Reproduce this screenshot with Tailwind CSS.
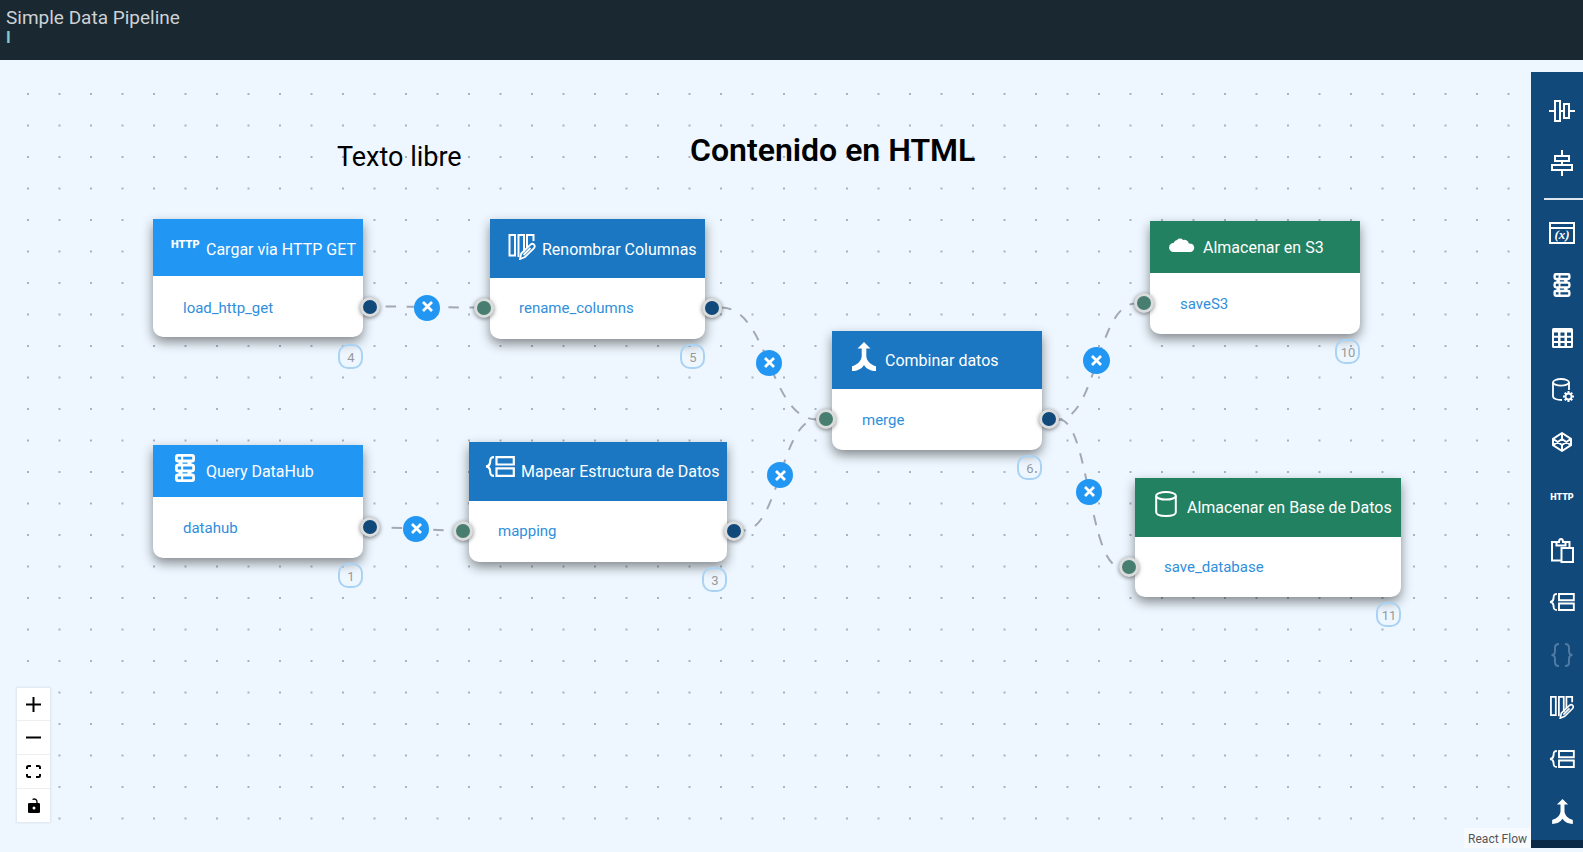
<!DOCTYPE html>
<html lang="es">
<head>
<meta charset="utf-8">
<title>Simple Data Pipeline</title>
<script src="https://cdn.jsdelivr.net/npm/@tailwindcss/browser@4"></script>
</head>
<body class="flex min-h-screen flex-col overflow-hidden bg-[#eef7ff] font-[Roboto,sans-serif]">
<svg class="hidden">
  <symbol id="columns" viewBox="0 0 27 26"><g fill="none" stroke="currentColor" stroke-width="2"><path d="M1 1h5.500v20.500H1zM10 23V1h5.500v17M18.500 14V1H25v6"/><path d="M11.500 25l1.200-5.500L22 10.600q2-1.600 3.500 0t0 3.500L16.500 23zM15 21l7-7" stroke-width="1.800"/></g></symbol>
  <symbol id="hub" viewBox="0 0 20 28"><g fill="none" stroke="currentColor" stroke-width="2.800"><rect x="1.400" y="1.400" width="17.200" height="5.600" rx="1.500"/><rect x="1.400" y="11.200" width="17.200" height="5.600" rx="1.500"/><rect x="1.400" y="21" width="17.200" height="5.600" rx="1.500"/></g><path fill="currentColor" d="M6 2h2.200v4H6zM6 12h2.200v4H6zM6 22h2.200v4H6zM3.500 7h4v4h-4zM12.500 7h4v4h-4zM3.500 17h4v4h-4zM12.500 17h4v4h-4z"/></symbol>
  <symbol id="mapping" viewBox="0 0 30 21"><path fill="none" stroke="currentColor" stroke-width="2.200" d="M11.500 1.200h17.300v7.300H11.500zM11.500 12.300h17.300v7.500H11.500zM9 1.200C4.500 1.200 5.500 4 5 7Q4.400 10.300 1 10.500Q4.400 10.700 5 14C5.500 17 4.500 19.800 9 19.800"/></symbol>
  <symbol id="merge" viewBox="0 0 24 29"><path fill="currentColor" d="M12 0l6.500 6.500H14.300V14c0 5 4.700 9 9.700 10.300V29c-5 0-9.500-2-12-6C9.500 27 5 29 0 29v-4.700C5 23 9.700 19 9.700 14V6.500H5.500z"/></symbol>
  <symbol id="cloud" viewBox="0 0 24 13"><path fill="currentColor" d="M4.200 13A4.200 4.200 0 0 1 4.200 4.600A4.300 4.300 0 0 1 7.400 1.800A3.800 3.800 0 0 1 13 1.800A4 4 0 0 1 18.300 5.200A4 4 0 0 1 20.300 13z"/></symbol>
  <symbol id="database" viewBox="0 0 22 26"><g fill="none" stroke="currentColor" stroke-width="2"><ellipse cx="11" cy="4.800" rx="9.800" ry="3.800"/><path d="M1.200 4.800v16.400c0 5 19.600 5 19.600 0V4.800"/></g></symbol>
</svg>

<header class="h-[60px] bg-[#1a2832] px-[6px] pt-[6px]">
  <h1 class="text-[19px] leading-6 text-[#cdd2d5]">Simple Data Pipeline</h1>
  <p class="text-[16px] font-bold leading-4 text-[#80cbc4]">I</p>
</header>

<main class="relative flex-1">
  <!-- Dot grid -->
  <div class="absolute inset-x-0 bottom-1 top-3"><svg class="h-full w-full">
    <defs><pattern id="dots" x="12.250" y="6.250" width="31.500" height="31.500" patternUnits="userSpaceOnUse"><circle cx="15.750" cy="15.750" r="1.100" fill="#97a1b4"/></pattern></defs>
    <rect y="10" width="100%" height="750" fill="url(#dots)"/>
  </svg></div>
  <!-- Connections -->
  <svg class="absolute inset-0 h-full w-full">
    <g transform="translate(0 -60)" fill="none" stroke="#a3a8b4" stroke-width="2" stroke-dasharray="10.500 10.500">
      <path stroke-dashoffset="10.500" d="M375 306.500C425 306.500 425 307.500 480 307.500"/>
      <path stroke-dashoffset="10.500" d="M381 527.600C420 527.600 420 530.500 463 530.500"/>
      <path d="M721 307.500C769 307.500 769 419.500 817 419.500"/>
      <path stroke-dashoffset="8" d="M743 530.500C780 530.500 780 419.500 817 419.500"/>
      <path stroke-dashoffset="6" d="M1058 419.500C1097 419.500 1097 303.500 1136 303.500"/>
      <path d="M1059 419.500C1089 419.500 1089 566.500 1120 566.500"/>
    </g>
  </svg>

  <p class="absolute left-[337px] top-[77px] text-[27px] leading-[40px] text-black">Texto libre</p>
  <h2 class="absolute left-[690px] top-[70px] text-[32px] font-semibold leading-[40px] text-black">Contenido en HTML</h2>

  <!-- Nodes -->
  <article class="absolute left-[153px] top-[159px] w-[210px] rounded-b-[10px] bg-white shadow-[0_5px_12px_rgba(0,0,0,0.45)]">
    <div class="flex h-[57px] items-center gap-[7px] bg-[#2196f3] pl-[18px] pt-1 text-white"><span class="mb-[10px] w-[28px] text-[11px] font-black leading-3">HTTP</span><h3 class="whitespace-nowrap text-[16px] leading-6">Cargar via HTTP GET</h3></div>
    <p class="h-[61px] pl-[30px] text-[15px] leading-[64px] text-[#2f8fdb]">load_http_get</p>
    <i class="absolute -right-[17px] top-[78px] size-5 rounded-full border-[3px] border-[#dadcdd] bg-[#11497a] shadow-[0_1px_4px_rgba(0,0,0,0.5)]"></i>
    <span class="absolute right-0 top-[125px] size-[25px] rounded-[10px] border-2 border-[#a9d2f3] pl-px text-center text-[13px] leading-[24px] text-[#999]">4</span>
  </article>

  <article class="absolute left-[490px] top-[159px] w-[215px] rounded-b-[10px] bg-white shadow-[0_5px_12px_rgba(0,0,0,0.45)]">
    <div class="flex h-[59px] items-center gap-[6px] bg-[#1b77c2] pl-[18px] pt-[2px] text-white"><svg class="mb-[6px] h-[26px] w-[28px]"><use href="#columns"/></svg><h3 class="whitespace-nowrap text-[16px] leading-6">Renombrar Columnas</h3></div>
    <p class="h-[61px] pl-[29px] text-[15px] leading-[60px] text-[#2f8fdb]">rename_columns</p>
    <i class="absolute -left-[16px] top-[79px] size-5 rounded-full border-[3px] border-[#dadcdd] bg-[#487e6f] shadow-[0_1px_4px_rgba(0,0,0,0.5)]"></i>
    <i class="absolute -right-[17px] top-[79px] size-5 rounded-full border-[3px] border-[#dadcdd] bg-[#11497a] shadow-[0_1px_4px_rgba(0,0,0,0.5)]"></i>
    <span class="absolute right-0 top-[125px] size-[25px] rounded-[10px] border-2 border-[#a9d2f3] pl-px text-center text-[13px] leading-[24px] text-[#999]">5</span>
  </article>

  <article class="absolute left-[153px] top-[385px] w-[210px] rounded-b-[10px] bg-white shadow-[0_5px_12px_rgba(0,0,0,0.45)]">
    <div class="flex h-[52px] items-center gap-[7px] bg-[#2196f3] pl-[18px] pt-[2px] text-white"><svg class="mb-2 h-[28px] w-[28px]"><use href="#hub"/></svg><h3 class="whitespace-nowrap text-[16px] leading-6">Query DataHub</h3></div>
    <p class="h-[61px] pl-[30px] text-[15px] leading-[62px] text-[#2f8fdb]">datahub</p>
    <i class="absolute -right-[17px] top-[72px] size-5 rounded-full border-[3px] border-[#dadcdd] bg-[#11497a] shadow-[0_1px_4px_rgba(0,0,0,0.5)]"></i>
    <span class="absolute right-0 top-[118px] size-[25px] rounded-[10px] border-2 border-[#a9d2f3] pl-px text-center text-[13px] leading-[24px] text-[#999]">1</span>
  </article>

  <article class="absolute left-[469px] top-[382px] w-[258px] rounded-b-[10px] bg-white shadow-[0_5px_12px_rgba(0,0,0,0.45)]">
    <div class="flex h-[59px] items-center gap-[6px] bg-[#1b77c2] pl-[16px] text-white"><svg class="mb-[10px] h-[21px] w-[30px]"><use href="#mapping"/></svg><h3 class="whitespace-nowrap text-[16px] leading-6">Mapear Estructura de Datos</h3></div>
    <p class="h-[61px] pl-[29px] text-[15px] leading-[60px] text-[#2f8fdb]">mapping</p>
    <i class="absolute -left-[16px] top-[79px] size-5 rounded-full border-[3px] border-[#dadcdd] bg-[#487e6f] shadow-[0_1px_4px_rgba(0,0,0,0.5)]"></i>
    <i class="absolute -right-[17px] top-[79px] size-5 rounded-full border-[3px] border-[#dadcdd] bg-[#11497a] shadow-[0_1px_4px_rgba(0,0,0,0.5)]"></i>
    <span class="absolute right-0 top-[125px] size-[25px] rounded-[10px] border-2 border-[#a9d2f3] pl-px text-center text-[13px] leading-[24px] text-[#999]">3</span>
  </article>

  <article class="absolute left-[832px] top-[271px] w-[210px] rounded-b-[10px] bg-white shadow-[0_5px_12px_rgba(0,0,0,0.45)]">
    <div class="flex h-[58px] items-center gap-[7px] bg-[#1b77c2] pl-[18px] pt-[2px] text-white"><svg class="mb-[10px] h-[29px] w-[28px]"><use href="#merge"/></svg><h3 class="whitespace-nowrap text-[16px] leading-6">Combinar datos</h3></div>
    <p class="h-[61px] pl-[30px] text-[15px] leading-[62px] text-[#2f8fdb]">merge</p>
    <i class="absolute -left-[16px] top-[78px] size-5 rounded-full border-[3px] border-[#dadcdd] bg-[#487e6f] shadow-[0_1px_4px_rgba(0,0,0,0.5)]"></i>
    <i class="absolute -right-[17px] top-[78px] size-5 rounded-full border-[3px] border-[#dadcdd] bg-[#11497a] shadow-[0_1px_4px_rgba(0,0,0,0.5)]"></i>
    <span class="absolute right-0 top-[124px] size-[25px] rounded-[10px] border-2 border-[#a9d2f3] pl-px text-center text-[13px] leading-[24px] text-[#999]">6</span>
  </article>

  <article class="absolute left-[1150px] top-[161px] w-[210px] rounded-b-[10px] bg-white shadow-[0_5px_12px_rgba(0,0,0,0.45)]">
    <div class="flex h-[52px] items-center gap-[7px] bg-[#228161] pl-[18px] pt-[2px] text-white"><svg class="mb-[6px] h-[14px] w-[28px]"><use href="#cloud"/></svg><h3 class="whitespace-nowrap text-[16px] leading-6">Almacenar en S3</h3></div>
    <p class="h-[61px] pl-[30px] text-[15px] leading-[62px] text-[#2f8fdb]">saveS3</p>
    <i class="absolute -left-[16px] top-[72px] size-5 rounded-full border-[3px] border-[#dadcdd] bg-[#487e6f] shadow-[0_1px_4px_rgba(0,0,0,0.5)]"></i>
    <span class="absolute right-0 top-[118px] size-[25px] rounded-[10px] border-2 border-[#a9d2f3] pl-px text-center text-[13px] leading-[24px] text-[#999]">10</span>
  </article>

  <article class="absolute left-[1135px] top-[418px] w-[266px] rounded-b-[10px] bg-white shadow-[0_5px_12px_rgba(0,0,0,0.45)]">
    <div class="flex h-[59px] items-center gap-[7px] bg-[#228161] pl-[17px] text-white"><svg class="mb-2 h-[26px] w-[28px]"><use href="#database"/></svg><h3 class="whitespace-nowrap text-[16px] leading-6">Almacenar en Base de Datos</h3></div>
    <p class="h-[60px] pl-[29px] text-[15px] leading-[60px] text-[#2f8fdb]">save_database</p>
    <i class="absolute -left-[16px] top-[79px] size-5 rounded-full border-[3px] border-[#dadcdd] bg-[#487e6f] shadow-[0_1px_4px_rgba(0,0,0,0.5)]"></i>
    <span class="absolute right-0 top-[124px] size-[25px] rounded-[10px] border-2 border-[#a9d2f3] pl-px text-center text-[13px] leading-[24px] text-[#999]">11</span>
  </article>

  <!-- Edge removal buttons -->
  <button aria-label="Eliminar conexión" class="absolute left-[414px] top-[235px] grid size-[26px] place-items-center rounded-full bg-[#2196f3] text-white"><svg class="mb-[3px] size-[11px]" viewBox="0 0 11 11" stroke="currentColor" stroke-width="2.800"><path d="M1 1l9 9M10 1l-9 9"/></svg></button>
  <button aria-label="Eliminar conexión" class="absolute left-[756px] top-[290px] grid size-[26px] place-items-center rounded-full bg-[#2196f3] text-white"><svg class="mb-[2px] size-[11px]" viewBox="0 0 11 11" stroke="currentColor" stroke-width="2.800"><path d="M1 1l9 9M10 1l-9 9"/></svg></button>
  <button aria-label="Eliminar conexión" class="absolute left-[403px] top-[456px] grid size-[26px] place-items-center rounded-full bg-[#2196f3] text-white"><svg class="mb-[2px] size-[11px]" viewBox="0 0 11 11" stroke="currentColor" stroke-width="2.800"><path d="M1 1l9 9M10 1l-9 9"/></svg></button>
  <button aria-label="Eliminar conexión" class="absolute left-[767px] top-[402px] grid size-[26px] place-items-center rounded-full bg-[#2196f3] text-white"><svg class="size-[11px]" viewBox="0 0 11 11" stroke="currentColor" stroke-width="2.800"><path d="M1 1l9 9M10 1l-9 9"/></svg></button>
  <button aria-label="Eliminar conexión" class="absolute left-[1083px] top-[287px] grid size-[27px] place-items-center rounded-full bg-[#2196f3] text-white"><svg class="size-[11px]" viewBox="0 0 11 11" stroke="currentColor" stroke-width="2.800"><path d="M1 1l9 9M10 1l-9 9"/></svg></button>
  <button aria-label="Eliminar conexión" class="absolute left-[1076px] top-[419px] grid size-[26px] place-items-center rounded-full bg-[#2196f3] text-white"><svg class="mb-[2px] size-[11px]" viewBox="0 0 11 11" stroke="currentColor" stroke-width="2.800"><path d="M1 1l9 9M10 1l-9 9"/></svg></button>

  <!-- Zoom controls -->
  <div class="absolute bottom-[30px] left-[17px] flex w-[33px] flex-col divide-y divide-[#eee] bg-white shadow-[0_0_2px_1px_rgba(0,0,0,0.08)]">
    <button aria-label="Acercar" class="grid h-[33px] place-items-center"><svg class="size-[15px]" viewBox="0 0 15 15" stroke="#000" stroke-width="2"><path d="M7.500 0v15M0 7.500h15"/></svg></button>
    <button aria-label="Alejar" class="grid h-[34px] place-items-center"><svg class="size-[15px]" viewBox="0 0 15 15" stroke="#000" stroke-width="2"><path d="M0 7.500h15"/></svg></button>
    <button aria-label="Ajustar vista" class="grid h-[34px] place-items-center"><svg class="size-[15px]" viewBox="0 0 15 15" fill="none" stroke="#000" stroke-width="2"><path d="M1 5V3.500Q1 2 2.500 2H5M10 2h2.500Q14 2 14 3.500V5M14 10v1.500Q14 13 12.500 13H10M5 13H2.500Q1 13 1 11.500V10"/></svg></button>
    <button aria-label="Bloquear" class="grid h-[33px] place-items-center"><svg class="h-[15px] w-[12px]" viewBox="0 0 12 15"><path fill="none" stroke="#000" stroke-width="1.300" d="M4.500 1.500C7 .3 9 1.500 9 4v2"/><rect y="5" width="12" height="10" rx="1.300"/><circle cx="6" cy="10" r="1.500" fill="#fff"/></svg></button>
  </div>

  <a href="#" class="absolute bottom-1 right-[52px] bg-white/50 px-[4px] pb-px pt-[3px] text-[12px] leading-4 text-[#555]">React Flow</a>

  <!-- Tool palette -->
  <nav class="absolute bottom-1 right-0 top-3 flex w-[52px] flex-col bg-[#11497a] pt-[13px] text-white">
    <button aria-label="Alinear horizontal" class="grid h-[52px] place-items-center pl-[10px]"><svg class="h-[22px] w-[26px]" viewBox="0 0 26 22" fill="none" stroke="currentColor" stroke-width="2"><path d="M0 11h5M11 11h3M20 11h6M6 1h5v20H6zM15 4h5v14h-5z"/></svg></button>
    <button aria-label="Alinear vertical" class="grid h-[52px] place-items-center pl-[10px]"><svg class="h-[26px] w-[22px]" viewBox="0 0 22 26" fill="none" stroke="currentColor" stroke-width="2"><path d="M11 0v5M11 11v3M11 20v6M1 15h20v5H1zM4 6h14v5H4z"/></svg></button>
    <hr class="mb-[7px] ml-[13px] mt-[9px] border-t-2 border-[#dde6ee]">
    <div class="flex flex-1 flex-col pb-[2px]">
      <button aria-label="Variables" class="grid flex-1 place-items-center pl-[10px]"><svg class="h-[22px] w-[26px]" viewBox="0 0 26 22"><path fill="none" stroke="currentColor" stroke-width="2" d="M1 1h24v20H1zM1 6h24"/><text x="13" y="17" text-anchor="middle" font-family="Liberation Serif, serif" font-style="italic" font-weight="bold" font-size="13" fill="currentColor">(x)</text></svg></button>
      <button aria-label="Query DataHub" class="grid flex-1 place-items-center pl-[10px]"><svg class="h-[24px] w-[18px]"><use href="#hub"/></svg></button>
      <button aria-label="Tabla" class="grid flex-1 place-items-center pl-[10px]"><svg class="h-[20px] w-[21px]" viewBox="0 0 21 20"><path fill="currentColor" fill-rule="evenodd" d="M1.500 0h18q1.500 0 1.500 1.500v17q0 1.500-1.500 1.500h-18Q0 20 0 18.500v-17Q0 0 1.500 0zM2 4.500v3.200h4V4.500zM8.500 4.500v3.200h4V4.500zM15 4.500v3.200h4V4.500zM2 9.700v3.200h4V9.700zM8.500 9.700v3.200h4V9.700zM15 9.700v3.200h4V9.700zM2 14.900v3.100h4v-3.100zM8.500 14.900v3.100h4v-3.100zM15 14.900v3.100h4v-3.100z"/></svg></button>
      <button aria-label="Configurar base de datos" class="grid flex-1 place-items-center pl-[12px]"><svg class="h-[24px] w-[22px]" viewBox="0 0 22 24" fill="none" stroke="currentColor" stroke-width="1.800"><ellipse cx="9" cy="4.300" rx="8" ry="3.300"/><path d="M1 4.300v14.500Q2 22 10 22M17 4.300V12"/><circle cx="16.500" cy="18.500" r="3"/><path stroke-width="2" d="M16.500 13v2.500M16.500 21.500V24M11 18.500h2.500M19.500 18.500H22M12.700 14.700l1.700 1.700M18.600 20.600l1.700 1.700M20.300 14.700l-1.700 1.700M14.400 20.600l-1.700 1.700"/></svg></button>
      <button aria-label="Cubo" class="grid flex-1 place-items-center pl-[10px]"><svg class="size-[20px]" viewBox="0 0 20 20" fill="none" stroke="currentColor" stroke-width="2" stroke-linejoin="round"><path d="M10 1l9 5.800v6.400L10 19l-9-5.800V6.800zM1 6.800l9 6.200 9-6.200M1 13.200L10 7l9 6.200M10 1v6M10 13v6"/></svg></button>
      <button aria-label="Cargar via HTTP" class="grid flex-1 place-items-center pl-[10px] pt-[3px] text-[9px] font-black">HTTP</button>
      <button aria-label="Pegar" class="grid flex-1 place-items-center pl-[10px]"><svg class="h-[25px] w-[23px]" viewBox="0 0 23 25" fill="none" stroke="currentColor" stroke-width="2"><path d="M10 22.500H1V4h5M14 4h4.500v5M5.500 7.500V4H8q0-3 2-3t2 3h2.500v3.500zM10.500 10H22v14H10.500z"/></svg></button>
      <button aria-label="Mapear" class="grid flex-1 place-items-center pl-[10px]"><svg class="h-[18px] w-[26px]"><use href="#mapping"/></svg></button>
      <button aria-label="JSON" disabled class="grid flex-1 place-items-center pl-[10px] text-[#4f7ba3]"><svg class="h-[24px] w-[24px]" viewBox="0 0 24 24" fill="none" stroke="currentColor" stroke-width="2"><path d="M9 1Q5 1 5 4.500V8Q5 12 1.500 12Q5 12 5 16v3.500Q5 23 9 23M15 1q4 0 4 3.500V8q0 4 3.500 4q-3.500 0-3.500 4v3.500Q19 23 15 23"/></svg></button>
      <button aria-label="Renombrar Columnas" class="grid flex-1 place-items-center pl-[10px]"><svg class="h-[23px] w-[24px]"><use href="#columns"/></svg></button>
      <button aria-label="Mapear Estructura de Datos" class="grid flex-1 place-items-center pl-[10px]"><svg class="h-[18px] w-[26px]"><use href="#mapping"/></svg></button>
      <button aria-label="Combinar datos" class="grid flex-1 place-items-center pl-[10px]"><svg class="h-[25px] w-[21px]"><use href="#merge"/></svg></button>
    </div>
    <div class="h-2 bg-[#0a2a47]"></div>
  </nav>
</main>
</body>
</html>
